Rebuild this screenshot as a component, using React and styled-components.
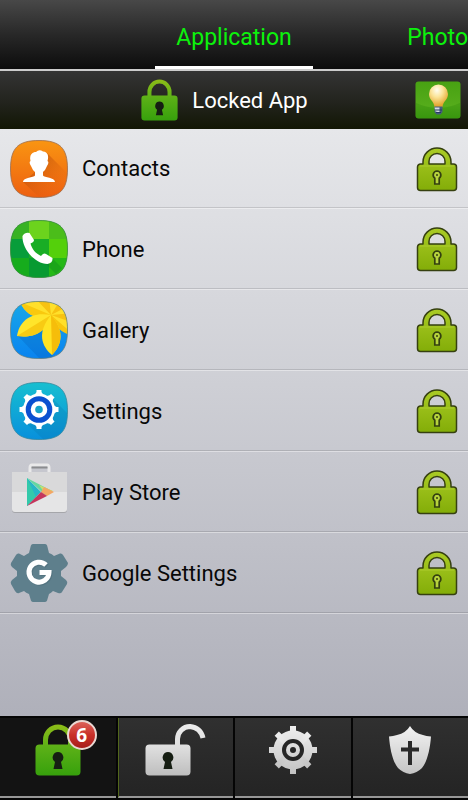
import React, { useId } from 'react'
import styled, { createGlobalStyle } from 'styled-components';

const GlobalStyle = createGlobalStyle`
  * {
    box-sizing: border-box;
  }
  body {
    margin: 0;
    background: #000;
    font-family: Roboto, "Liberation Sans", sans-serif;
  }
  button {
    padding: 0;
    border: 0;
    background: none;
    color: inherit;
    font: inherit;
    cursor: pointer;
  }
  svg {
    display: block;
  }
`;

function Padlock({ open, width, height }) {
  const id = useId();
  const fill = `url(#${id})`;
  return (
    <svg width={width} height={height} viewBox={open ? '0 0 61 52' : '0 0 46 52'} aria-hidden="true">
      <defs>
        <linearGradient id={id} gradientUnits="userSpaceOnUse" x1="0" y1="0" x2="0" y2="52">
          <stop offset="0" stopColor={open ? '#ececec' : '#8fbd18'} />
          <stop offset=".45" stopColor={open ? '#dedede' : '#5bb017'} />
          <stop offset="1" stopColor={open ? '#bdbdbd' : '#36a00c'} />
        </linearGradient>
      </defs>
      {open ? (
        <path d="M32.500 22V15A12.500 12.500 0 0 1 45 2.500Q55.500 3.500 58 14" fill="none" stroke={fill} strokeWidth="5" />
      ) : (
        <path d="M10.500 22V16A12.500 13 0 0 1 35.500 16V22" fill="none" stroke={fill} strokeWidth="5" />
      )}
      <rect x=".5" y="20.500" width="45" height="31" rx="4" fill={fill} />
      <path d="M23 28a5.500 5.500 0 0 0-3 10L18.500 45h9L26 38A5.500 5.500 0 0 0 23 28Z" fill="#161e13" />
    </svg>
  );
}

function RowLock() {
  const id = useId();
  return (
    <svg width="42" height="46" viewBox="0 0 42 46" aria-hidden="true">
      <defs>
        <linearGradient id={id} x1="0" y1="0" x2="0" y2="1">
          <stop offset="0" stopColor="#aacb25" />
          <stop offset="1" stopColor="#83ad08" />
        </linearGradient>
      </defs>
      <path
        d="M7 18V16a14 14 0 0 1 28 0V18H37.500a3 3 0 0 1 3 3V41.500a3 3 0 0 1-3 3H4.500a3 3 0 0 1-3-3V21a3 3 0 0 1 3-3ZM13 18H29V15.500a8 8 0 0 0-16 0Z"
        fill={`url(#${id})`} fillRule="evenodd" stroke="#364010" strokeWidth="1.500" strokeLinejoin="round"
      />
      <path d="M4 20H38" stroke="#c1dc42" opacity=".5" />
      <path d="M21 25a4 4 0 0 0-2.200 7.200V38h4.400V32.200A4 4 0 0 0 21 25Z" fill="#b7d33d" stroke="#344110" strokeWidth="1.700" />
      <circle cx="21" cy="29" r="1" fill="#344110" />
    </svg>
  );
}

function Bulb() {
  return (
    <svg width="46" height="38" viewBox="0 0 46 38" aria-hidden="true">
      <defs>
        <linearGradient id="bulbCard" x1="0" y1="0" x2="0" y2="1">
          <stop offset="0" stopColor="#48a112" />
          <stop offset=".65" stopColor="#55ac1b" />
          <stop offset="1" stopColor="#3c9b10" />
        </linearGradient>
        <radialGradient id="bulbGlass" cx=".42" cy=".25" r=".7">
          <stop offset="0" stopColor="#fffdf0" />
          <stop offset=".45" stopColor="#fbe498" />
          <stop offset="1" stopColor="#e3a52f" />
        </radialGradient>
      </defs>
      <rect x=".5" y=".5" width="45" height="37" rx="3" fill="url(#bulbCard)" />
      <path d="M1 22Q23 32 45 22V35a2 2 0 0 1-2 2H3a2 2 0 0 1-2-2Z" fill="#328c0b" opacity=".35" />
      <path d="M23.500 3.500A9.500 9.500 0 0 0 14 13c0 6 5 7 5.500 13h8C28 20 33 19 33 13a9.500 9.500 0 0 0-9.500-9.500Z" fill="url(#bulbGlass)" />
      <path d="M19.500 25.500h8v5.500l-2 2.500h-4l-2-2.500Z" fill="#465b7d" />
      <path d="M19.500 26.500h5v5l-4-1Z" fill="#d6dce4" />
      <path d="M20 29h7M21 31.500h5" stroke="#273c62" />
    </svg>
  );
}

const tilePath = 'M29 .5C50 .5 57.500 8 57.500 29S50 57.500 29 57.500 .5 50 .5 29 8 .5 29 .5Z';

function ContactsIcon() {
  return (
    <svg width="58" height="58" viewBox="0 0 58 58" aria-hidden="true">
      <defs>
        <linearGradient id="contactsFill" x1="0" y1="0" x2="0" y2="1">
          <stop offset="0" stopColor="#f99512" />
          <stop offset="1" stopColor="#ed5f10" />
        </linearGradient>
        <linearGradient id="contactsShade" x1="0" y1="0" x2="1" y2="1">
          <stop offset=".2" stopColor="#ad450a" stopOpacity=".6" />
          <stop offset=".8" stopColor="#d75b0e" stopOpacity="0" />
        </linearGradient>
      </defs>
      <path d={tilePath} fill="url(#contactsFill)" stroke="#9a6c4e" strokeWidth=".8" />
      <path d="M37 13L57 33Q56 57 29 57L13 42L25 32Z" fill="url(#contactsShade)" />
      <path
        d="M20.500 21C19 14 23 12 26 12Q29 9 33 11.500C38 12 39 16 37.500 21Q39.500 22 37 26Q35.500 30 33 32V35.500C34 38 45 37 45 42H13C13 37 24 38 25 35.500V32Q22.500 30 21 26Q18.500 22 20.500 21Z"
        fill="#fff"
      />
    </svg>
  );
}

function PhoneIcon() {
  return (
    <svg width="58" height="58" viewBox="0 0 58 58" aria-hidden="true">
      <defs>
        <clipPath id="phoneClip"><path d={tilePath} /></clipPath>
      </defs>
      <g clipPath="url(#phoneClip)">
        <rect width="58" height="58" fill="#19ad25" />
        <path d="M0 0H19V19H0Z" fill="#38b224" />
        <path d="M19 0H39V19H19Z" fill="#6cd31d" />
        <path d="M39 0H58V19H39Z" fill="#4bbd1a" />
        <path d="M0 19H19V38H0Z" fill="#079d3a" />
        <path d="M39 19H58V38H39Z" fill="#54d00b" />
        <path d="M0 38H19V58H0Z" fill="#16ac1c" />
        <path d="M19 38H39V58H19Z" fill="#079a31" />
        <path d="M39 38H58V58H39Z" fill="#24b816" />
        <path d="M42 38L52 48L46 54L36 44Z" fill="#087b20" opacity=".3" />
      </g>
      <path d={tilePath} fill="none" stroke="#3f8d43" strokeWidth=".8" />
      <path
        d="M12.500 16Q15 12 19.500 13L24 20Q24 22 20.500 23.500C22 29 25 33 31 36Q34 32.500 36 34L42.500 38Q43 43 37.500 44C26 44 12 30 12.500 16Z"
        fill="#fff"
      />
    </svg>
  );
}

function GalleryIcon() {
  return (
    <svg width="58" height="58" viewBox="0 0 58 58" aria-hidden="true">
      <defs>
        <linearGradient id="galleryFill" x1="0" y1="0" x2="0" y2="1">
          <stop offset="0" stopColor="#18a8e8" />
          <stop offset="1" stopColor="#0983f0" />
        </linearGradient>
        <clipPath id="galleryClip"><path d={tilePath} /></clipPath>
      </defs>
      <path d={tilePath} fill="url(#galleryFill)" />
      <g clipPath="url(#galleryClip)">
        <path d="M8 35L33 30L42 54L46 58H30Z" fill="#075fb8" opacity=".3" />
        <path d="M41 14C30 18 17 17 10 1L20-4H64V34C56 33 49 30 41 14Z" fill="#ffe02a" />
        <path d="M41 14L10 1C17 17 30 18 41 14Z" fill="#f9c90e" />
        <path d="M41 14L24-4H39Z" fill="#f7c211" />
        <path d="M41 14L52-4H64V2Z" fill="#f7c211" />
        <path d="M41 14L64 12V22Z" fill="#f7c211" />
        <path d="M41 14L64 34C56 34 47 30 41 14Z" fill="#f8c60d" />
        <path d="M7 35C9 21 20 10 41 14C36 33 22 37 7 35Z" fill="#ffe52b" />
        <path d="M7 35L41 14C36 33 22 37 7 35Z" fill="#f8cb13" />
        <path d="M41 14C27 31 31 45 42 54C52 44 55 30 41 14Z" fill="#ffe324" />
        <path d="M41 14L42 54C52 44 55 30 41 14Z" fill="#f6bd0a" />
      </g>
      <path d={tilePath} fill="none" stroke="#667d75" strokeWidth=".7" />
    </svg>
  );
}

function SettingsIcon() {
  return (
    <svg width="58" height="58" viewBox="0 0 58 58" aria-hidden="true">
      <defs>
        <linearGradient id="settingsFill" x1="0" y1="0" x2="0" y2="1">
          <stop offset="0" stopColor="#17bfd0" />
          <stop offset="1" stopColor="#0890dc" />
        </linearGradient>
      </defs>
      <path d={tilePath} fill="url(#settingsFill)" stroke="#36889d" strokeWidth=".8" />
      <path d="M42 16L57 31Q57 57 33 57L16 41Z" fill="#0873a9" opacity=".25" />
      <circle cx="29" cy="27.500" r="16" fill="#fff" />
      {[0, 45, 90, 135, 180, 225, 270, 315].map(angle => (
        <path key={angle} d="M24 14L26.500 10V8H31.500V10L34 14Z" fill="#fff" transform={`rotate(${angle} 29 27.500)`} />
      ))}
      <circle cx="29" cy="27.500" r="10.800" fill="#fff" stroke="#0a50d0" strokeWidth="5" />
      <circle cx="29" cy="27.500" r="3.800" fill="#16a2c9" />
    </svg>
  );
}

function PlayStoreIcon() {
  return (
    <svg width="58" height="58" viewBox="0 2 58 58" aria-hidden="true">
      <path d="M20 12V7Q20 4 22 4H37Q39 4 39 7V12" fill="none" stroke="#e9e9ea" strokeWidth="3" />
      <path d="M21.500 6.500H37.500" stroke="#8b8c8f" strokeWidth="2" />
      <path d="M2 12H57V49Q57 52 54 52H5Q2 52 2 49Z" fill="#a5a6aa" />
      <path d="M2 11H57V48Q57 51 54 51H5Q2 51 2 48Z" fill="#e5e5e6" />
      <path d="M2 11H57V31H2Z" fill="#d9d9da" />
      <path d="M17 17V45L31 31Z" fill="#26b6c6" />
      <path d="M17 17L26 36L17 45Z" fill="#33c9aa" />
      <path d="M17 17L36 35L42 30Z" fill="#65d8a0" />
      <path d="M29 24L43 30L36 34Z" fill="#c7df6f" />
      <path d="M34 26L44 31L37 35L31 31Z" fill="#f4a764" />
      <path d="M17 45L31 31L37 35Z" fill="#c5365c" />
    </svg>
  );
}

function GoogleSettingsIcon() {
  return (
    <svg width="58" height="58" viewBox="0 0 58 58" aria-hidden="true">
      <path
        d="M23 0H35Q37 0 37.500 3L39 9Q42 10 44 12L50 9.500Q52 9 53 11L58 19Q58 21 56 23L51 27V32L56 36Q58 38 57 40L52 48Q51 50 48 49L43 47Q41 49 39 50L37.500 55Q37 58 35 58H23Q21 58 20.500 55L19 50Q16 49 14 47L9 49Q7 50 5 47L1 40Q0 38 2 36L7 32V27L2 23Q0 21 1 19L6 11Q7 9 9 9.500L14 12Q17 10 19 9L20.500 3Q21 0 23 0Z"
        fill="#5e7f8c"
      />
      <g fill="none" strokeWidth="5">
        <path d="M36 21A10 10 0 1 0 39 28.500H29.500" stroke="#405f6b" opacity=".35" transform="translate(1 1)" />
        <path d="M36 21A10 10 0 1 0 39 28.500H29.500" stroke="#fff" />
      </g>
    </svg>
  );
}

function NavGear() {
  return (
    <svg width="50" height="52" viewBox="0 0 50 52" aria-hidden="true">
      <defs>
        <linearGradient id="navGear" gradientUnits="userSpaceOnUse" x1="0" y1="2" x2="0" y2="50">
          <stop offset="0" stopColor="#efefef" />
          <stop offset="1" stopColor="#c2c2c2" />
        </linearGradient>
      </defs>
      <g fill="url(#navGear)">
        <circle cx="25" cy="26" r="19.500" />
        <path d="M22 2H28V50H22ZM1 23H49V29H1Z" />
        <path d="M22 3H28V49H22Z" transform="rotate(45 25 26)" />
        <path d="M22 3H28V49H22Z" transform="rotate(-45 25 26)" />
      </g>
      <circle cx="25" cy="26" r="9" fill="none" stroke="#252525" strokeWidth="4" />
      <circle cx="25" cy="26" r="3" fill="#252525" />
    </svg>
  );
}

function NavShield() {
  return (
    <svg width="42" height="52" viewBox="0 0 42 52" aria-hidden="true">
      <defs>
        <linearGradient id="navShield" x1="0" y1="0" x2="0" y2="1">
          <stop offset="0" stopColor="#f3f3f3" />
          <stop offset="1" stopColor="#c4c4c4" />
        </linearGradient>
      </defs>
      <path d="M21 2Q17 9 8 11Q4 12 0 12.500C1 26 4 38 9 44Q14 49 21 50Q28 49 33 44C38 38 41 26 42 12.500Q37 12 34 11Q25 9 21 2Z" fill="url(#navShield)" />
      <path d="M21 17V41M12 25.500H30" stroke="#292929" strokeWidth="4" />
    </svg>
  );
}

const apps = [
  { name: 'Contacts', Icon: ContactsIcon },
  { name: 'Phone', Icon: PhoneIcon },
  { name: 'Gallery', Icon: GalleryIcon },
  { name: 'Settings', Icon: SettingsIcon },
  { name: 'Play Store', Icon: PlayStoreIcon },
  { name: 'Google Settings', Icon: GoogleSettingsIcon },
];

function App() {
  return (
    <Screen>
      <GlobalStyle />
      <Tabs aria-label="Categories">
        <span />
        <Tab $active>Application</Tab>
        <Tab $end>Photo</Tab>
      </Tabs>
      <Header>
        <span />
        <Title>
          <Padlock width={37} height={42} />
          <h1>Locked App</h1>
        </Title>
        <TipButton aria-label="Tips"><Bulb /></TipButton>
      </Header>
      <AppList>
        {apps.map(({ name, Icon }) => (
          <AppRow key={name}>
            <Icon />
            <AppName>{name}</AppName>
            <button aria-label={`Unlock ${name}`}><RowLock /></button>
          </AppRow>
        ))}
      </AppList>
      <BottomNav aria-label="Main">
        <NavButton $active aria-label="Locked apps, 6">
          <NavIcon>
            <Padlock width={46} height={52} />
            <Badge>6</Badge>
          </NavIcon>
        </NavButton>
        <NavButton aria-label="Unlocked apps"><Padlock open width={61} height={52} /></NavButton>
        <NavButton aria-label="Settings"><NavGear /></NavButton>
        <NavButton aria-label="Protection"><NavShield /></NavButton>
      </BottomNav>
    </Screen>
  );
}

const Screen = styled.div`
  min-height: 100vh;
  display: flex;
  flex-direction: column;
  font-size: 22px;
`;

const Tabs = styled.nav`
  height: 71px;
  display: grid;
  grid-template-columns: 1fr 158px 1fr;
  border-bottom: 2px solid #ccc;
  background: linear-gradient(#484848, #282828 50%, #0c0c0c);
  font-size: 23px;
`;

const Tab = styled.button`
  padding-top: 8px;
  border-bottom: 3px solid ${props => (props.$active ? '#fff' : 'transparent')};
  color: #0cf20c;
  text-align: ${props => (props.$end ? 'right' : 'center')};
`;

const Header = styled.header`
  height: 58px;
  padding-right: 7px;
  display: grid;
  grid-template-columns: 1fr auto 1fr;
  align-items: center;
  background: linear-gradient(#343434, #22231d 55%, #121604);
  color: #fff;
`;

const Title = styled.div`
  display: flex;
  align-items: center;
  gap: 14px;
  margin-right: 12px;

  h1 {
    margin: 0;
    font-size: 22px;
    font-weight: 400;
  }
`;

const TipButton = styled.button`
  justify-self: end;
`;

const AppList = styled.ul`
  flex: 1;
  margin: 0;
  padding: 0;
  list-style: none;
  background: linear-gradient(#e6e7ea, #afb0ba);
`;

const AppRow = styled.li`
  height: 81px;
  padding: 0 10px;
  display: flex;
  align-items: center;
  gap: 14px;
  border-bottom: 1px solid rgba(255, 255, 255, .4);
  box-shadow: inset 0 -1px rgba(0, 0, 0, .12);

  &:first-child {
    height: 80px;
  }
`;

const AppName = styled.span`
  flex: 1;
  color: #080808;
`;

const BottomNav = styled.nav`
  height: 84px;
  display: grid;
  grid-template-columns: repeat(4, 1fr);
  gap: 2px;
  padding: 2px 0;
  background: #050505;
`;

const NavButton = styled.button`
  display: flex;
  align-items: flex-start;
  justify-content: center;
  padding-top: 6px;
  border-bottom: 2px solid #979797;
  background: ${props => (props.$active ? '#131313' : 'linear-gradient(#303030, #242424)')};

  &:nth-child(2) {
    border-left: 1px solid #52671c;
  }
`;

const NavIcon = styled.span`
  position: relative;
`;

const Badge = styled.span`
  position: absolute;
  top: -4px;
  right: -16px;
  width: 30px;
  height: 30px;
  display: flex;
  align-items: center;
  justify-content: center;
  border: 2px solid #ead8d3;
  border-radius: 50%;
  background: linear-gradient(#dc6259, #c92f29 50%, #a81e1b);
  color: #fff;
  font: 700 19px "Open Sans", sans-serif;
`;

export default App;
